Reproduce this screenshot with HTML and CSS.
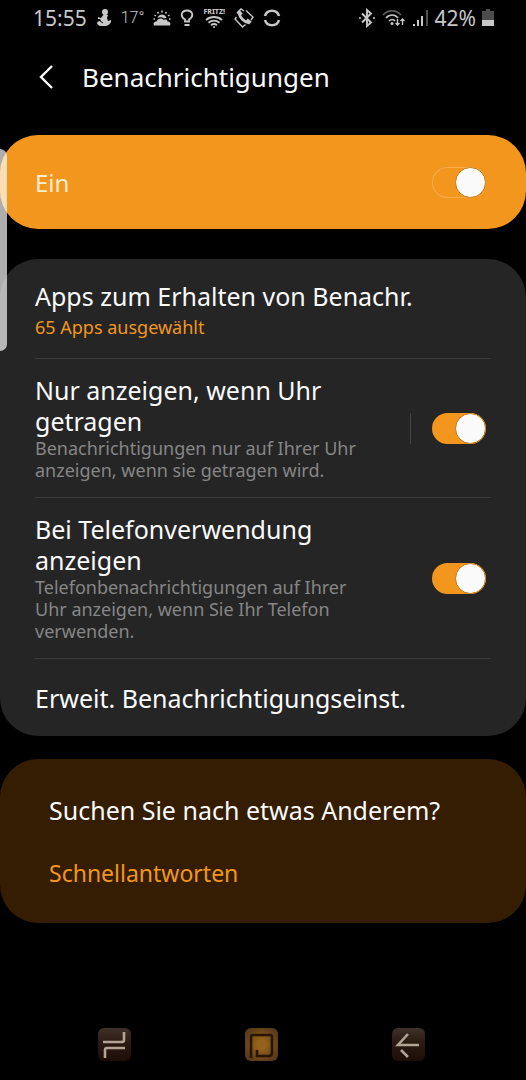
FILE: index.html
```html
<!DOCTYPE html>
<html lang="de">
<head>
  <meta charset="UTF-8">
  <meta name="viewport" content="width=device-width, initial-scale=1.0">
  <title>Benachrichtigungen</title>
  <link rel="stylesheet" href="styles.css">
</head>
<body>
  <div class="status-bar">
    <div class="status-left">
      <span class="clock">15:55</span>
      <svg width="16" height="18" viewBox="0 0 16 18" fill="currentColor">
        <circle cx="9" cy="3" r="3"/>
        <path d="M8 5l4 1-1 3 1 3 3-1v2c-1 2-3 4-6 4H5c-2 0-4-2-4-3 1-2 2-2 4-2l-1-2H2V8l3 1z"/>
        <path d="M4 12l3 2" stroke="#000" fill="none"/>
      </svg>
      <span class="temperature">17°</span>
      <svg width="18" height="18" viewBox="0 0 18 18">
        <path d="M1 16.500c-1-2 0-4 2.500-4C4.500 9 9 8.500 11 11c1-1 3.500-.5 3.500 1.500 2.500 0 3.500 2 2.500 4z" fill="currentColor"/>
        <path d="M4.500 9c1-4 7-5 9 0-1 0-2 0-2.500.5C9 7.500 6 8 4.500 9z" fill="currentColor"/>
        <path d="M9 1.500v2M4.500 3l1 1.500M13.500 3l-1 1.500M1.500 6l1.500 1M16.500 6L15 7M.5 10H2M16 10h1.500" stroke="currentColor" stroke-width="1.500"/>
      </svg>
      <svg width="14" height="18" viewBox="0 0 14 18" fill="none" stroke="currentColor" stroke-width="1.800">
        <path d="M5 12.500v-2C-.5 7 1.500 1.500 7 1.500S14.500 7 9 10.500v2z"/>
        <path d="M4.500 16h5" stroke-width="2"/>
      </svg>
      <span class="fritz">
        <span class="fritz-text">FRITZ!</span>
        <svg width="18" height="12" viewBox="0 0 18 12" fill="none" stroke="currentColor" stroke-width="1.800">
          <path d="M1 4c4.500-4 11.500-4 16 0M3.500 6.700c3.200-2.800 7.800-2.800 11 0M6 9.200c1.800-1.400 4.200-1.400 6 0"/>
          <circle cx="9" cy="11" r="1" fill="currentColor" stroke="none"/>
        </svg>
      </span>
      <svg width="20" height="20" viewBox="0 0 20 20" fill="none" stroke="currentColor">
        <path d="M2.500 9L1 11l7.500 8 3-2.500M5 3l2-2 3 2M12 2.500l7 6.500-2 3" stroke-width="1.400"/>
        <path d="M5.500 5.500c0 4 4.500 8.500 9 9" stroke-width="2.800"/>
        <path d="M4 3l3 4M12.500 12l4 3" stroke-width="4"/>
      </svg>
      <svg width="18" height="18" viewBox="0 0 18 18" fill="none" stroke="currentColor" stroke-width="2.600">
        <path d="M2 7c2-7 12-7 14 0M2 11c2 7 12 7 14 0"/>
      </svg>
    </div>
    <div class="status-right">
      <svg width="18" height="20" viewBox="0 0 18 20" fill="none" stroke="currentColor" stroke-width="1.900">
        <path d="M4 5.500l9 9L9 18V2l4 3.500-9 9"/>
        <circle cx="2" cy="10" r="1" fill="currentColor" stroke="none"/>
        <circle cx="16" cy="10" r="1" fill="currentColor" stroke="none"/>
      </svg>
      <svg width="24" height="18" viewBox="0 0 24 18" fill="none" stroke="currentColor" stroke-width="1.700">
        <path d="M1 6c5-5.500 13-5.500 18 0" opacity=".45"/>
        <path d="M4 9c3.500-4 9-4 12 0M7 12c2-2 4.500-2 6 0"/>
        <circle cx="10" cy="14.500" r="1.500" fill="currentColor" stroke="none"/>
        <path d="M15.500 10v6M13.500 14l2 2 2-2M20.500 16v-6M18.500 12l2-2 2 2" stroke-width="1.400"/>
      </svg>
      <svg width="17" height="18" viewBox="0 0 17 18" fill="currentColor">
        <path d="M1 15h2v2H1zM5 11h2v6H5zM9 7h2v10H9z"/>
        <path d="M14 1h2v16h-2z" opacity=".4"/>
      </svg>
      <span class="battery-level">42%</span>
      <svg width="12" height="18" viewBox="0 0 12 18">
        <path d="M4 0h4v2h4v9H0V2h4z" fill="#4c4c4c"/>
        <path d="M0 11h12v6H0z" fill="currentColor"/>
      </svg>
    </div>
  </div>

  <header class="app-header">
    <button class="back-button" type="button" aria-label="Zurück">
      <svg width="16" height="24" viewBox="0 0 16 24" fill="none" stroke="currentColor" stroke-width="2.400">
        <path d="M14 1L3 12l11 11"/>
      </svg>
    </button>
    <h1>Benachrichtigungen</h1>
  </header>

  <main>
    <section class="card master">
      <label for="master-switch">Ein</label>
      <input type="checkbox" class="switch" id="master-switch" checked>
    </section>

    <section class="card settings">
      <a class="row row-apps" href="#apps">
        <span class="title">Apps zum Erhalten von Benachr.</span>
        <span class="selected">65 Apps ausgewählt</span>
      </a>
      <div class="row row-switch">
        <label for="worn-switch">
          <span class="title">Nur anzeigen, wenn Uhr getragen</span>
          <span class="description">Benachrichtigungen nur auf Ihrer Uhr anzeigen, wenn sie getragen wird.</span>
        </label>
        <div class="switch-holder divided">
          <input type="checkbox" class="switch" id="worn-switch" checked>
        </div>
      </div>
      <div class="row row-switch">
        <label for="phone-switch">
          <span class="title">Bei Telefonverwendung anzeigen</span>
          <span class="description">Telefonbenachrichtigungen auf Ihrer Uhr anzeigen, wenn Sie Ihr Telefon verwenden.</span>
        </label>
        <div class="switch-holder">
          <input type="checkbox" class="switch" id="phone-switch" checked>
        </div>
      </div>
      <a class="row row-more" href="#mehr">
        <span class="title">Erweit. Benachrichtigungseinst.</span>
      </a>
    </section>

    <section class="card search">
      <h2>Suchen Sie nach etwas Anderem?</h2>
      <a href="#schnellantworten">Schnellantworten</a>
    </section>
  </main>

  <nav class="nav-bar">
    <button type="button" aria-label="Letzte Apps">
      <svg width="26" height="28" viewBox="0 0 26 28" fill="none" stroke="currentColor" stroke-width="2.600">
        <path d="M2 11h19q2 0 2-2V1M24 17H6q-2 0-2 2v8"/>
      </svg>
    </button>
    <button class="home" type="button" aria-label="Startseite">
      <svg width="26" height="28" viewBox="0 0 26 28" fill="none" stroke="#2a1405" stroke-width="2.600">
        <path d="M3 27V6q0-2 2-2h17q2 0 2 2v16q0 3-3 3H9v-6"/>
      </svg>
    </button>
    <button type="button" aria-label="Zurück">
      <svg width="26" height="28" viewBox="0 0 26 28" fill="none" stroke="currentColor" stroke-width="2.600">
        <path d="M13 3L3 14h21M6 19l7 7"/>
      </svg>
    </button>
  </nav>

  <div class="edge-handle"></div>
</body>
</html>
```
FILE: styles.css
```css
*,
*::before {
  box-sizing: border-box;
}

body {
  margin: 0;
  min-height: 100vh;
  display: flex;
  flex-direction: column;
  background-color: #000;
  color: #fafafa;
  font-family: "Noto Sans", sans-serif;
}

svg {
  display: block;
  flex: none;
}

button {
  padding: 0;
  border: 0;
  background: none;
  color: inherit;
}

a {
  color: inherit;
  text-decoration: none;
}

h1,
h2 {
  margin: 0;
  font-weight: 400;
}

/* Status bar */
.status-bar {
  display: flex;
  justify-content: space-between;
  align-items: center;
  height: 36px;
  padding: 0 32px 0 33px;
  color: #c8c8c8;
  font-size: 21px;
  line-height: 36px;
}

.status-left {
  display: flex;
  align-items: center;
  gap: 9px;
}

.status-right {
  display: flex;
  align-items: center;
  gap: 6px;
}

.temperature {
  font-family: Roboto, sans-serif;
  font-size: 16px;
  font-weight: 300;
}

.fritz {
  display: flex;
  flex-direction: column;
  align-items: center;
}

.fritz-text {
  font-size: 7px;
  font-weight: 800;
  line-height: 8px;
}

/* Header */
.app-header {
  display: flex;
  align-items: center;
  gap: 28px;
  height: 82px;
  padding: 0 38px;
}

h1 {
  font-size: 26px;
  line-height: 36px;
}

/* Cards */
main {
  flex: 1;
  padding-top: 17px;
}

.card {
  border-radius: 38px;
}

.master {
  display: flex;
  justify-content: space-between;
  align-items: center;
  height: 94px;
  margin-bottom: 30px;
  padding: 0 40px 0 35px;
  background-color: #f2961d;
  font-size: 24px;
}

.master label {
  color: #fdecd0;
}

.settings {
  margin-bottom: 23px;
  padding: 0 35px;
  background-color: #252525;
}

.row {
  display: block;
  border-bottom: 1px solid #3c3c3c;
}

.row:last-child {
  border-bottom: 0;
}

.row-apps {
  padding: 22px 0 20px;
}

.row-switch {
  display: flex;
  justify-content: space-between;
  align-items: center;
  gap: 32px;
  padding: 16px 0;
}

.row-more {
  padding: 24px 0 22px;
}

.title {
  display: block;
  font-size: 25px;
  line-height: 31px;
}

.selected,
.description {
  display: block;
  font-size: 18px;
  line-height: 22px;
}

.selected {
  margin-top: 4px;
  color: #f2961d;
}

.description {
  color: #868686;
}

.switch-holder {
  flex: none;
  display: flex;
  padding: 0 5px 0 21px;
  border-left: 1px solid transparent;
}

.divided {
  border-left-color: #464646;
}

.switch {
  appearance: none;
  flex: none;
  display: flex;
  justify-content: flex-end;
  width: 54px;
  height: 31px;
  margin: 0;
  border-radius: 16px;
  background-color: #f2961d;
}

.switch::before {
  content: "";
  width: 31px;
  height: 31px;
  border: 1px solid #c47a18;
  border-radius: 50%;
  background-color: #fafafa;
}

.master .switch {
  box-shadow: inset 0 0 0 1px #f8ac4c;
}

.search {
  display: flex;
  flex-direction: column;
  align-items: flex-start;
  gap: 32px;
  padding: 36px 49px 34px;
  background-color: #351d02;
}

.search h2 {
  font-size: 25px;
  line-height: 31px;
}

.search a {
  color: #f2961d;
  font-size: 23px;
  line-height: 31px;
}

/* Navigation bar */
.nav-bar {
  display: flex;
  justify-content: center;
  gap: 114px;
  padding: 0 4px 19px 0;
}

.nav-bar button {
  display: flex;
  justify-content: center;
  align-items: center;
  width: 33px;
  height: 33px;
  border-radius: 6px;
  background: linear-gradient(#3f3029, #2b1a12 45%, #1c0e07);
  color: #b0a595;
}

.nav-bar .home {
  background: radial-gradient(#946319 20%, #5c3b1c 75%);
}

/* Edge panel handle, floats over the cards */
.edge-handle {
  position: fixed;
  top: 149px;
  left: 0;
  width: 7px;
  height: 202px;
  border-radius: 0 7px 7px 0;
  background-color: rgba(255, 255, 255, 0.68);
}
```
